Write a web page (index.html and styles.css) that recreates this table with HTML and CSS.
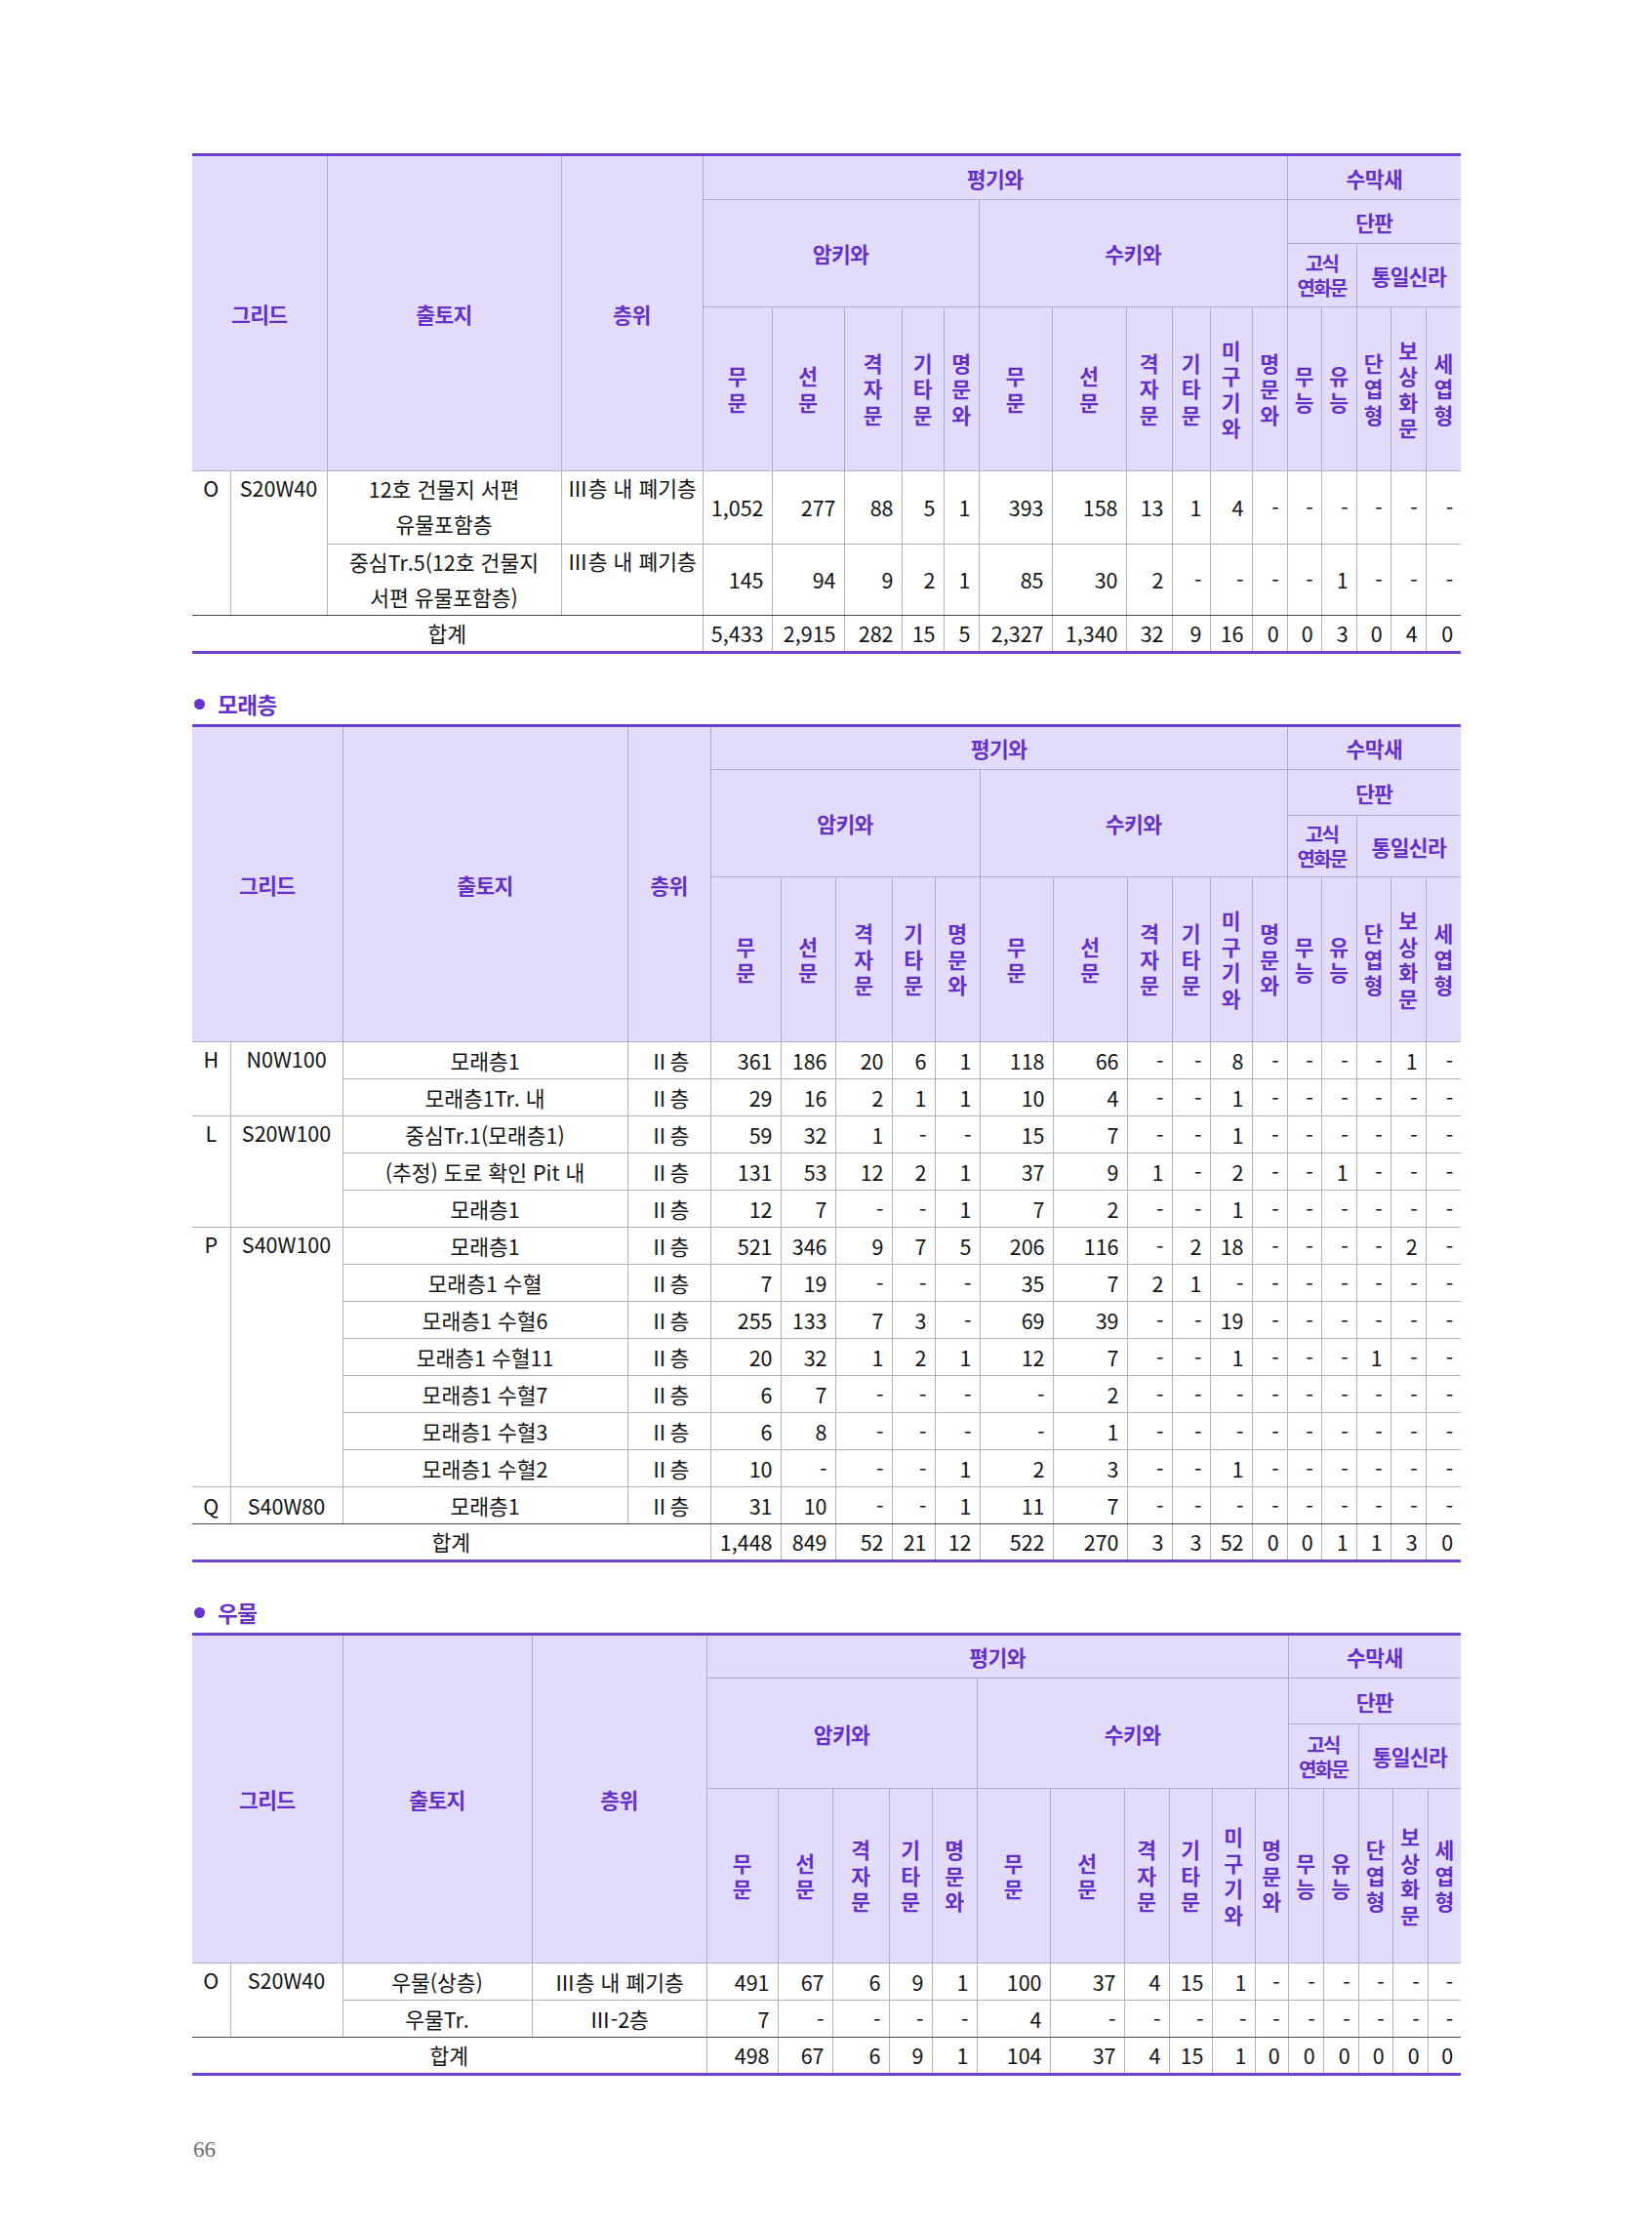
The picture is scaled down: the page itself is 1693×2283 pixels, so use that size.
FILE: index.html
```html
<!DOCTYPE html>
<html lang="ko">
<head>
<meta charset="utf-8">
<title>66</title>
<link rel="stylesheet" href="styles.css">
</head>
<body>
<div class="page">

<table class="tbl t1">
<colgroup>
<col class="w39"><col class="w99"><col class="w240"><col class="w145">
<col class="w71"><col class="w74"><col class="w59"><col class="w43"><col class="w36">
<col class="w75"><col class="w76"><col class="w47"><col class="w39"><col class="w43"><col class="w36">
<col class="w35"><col class="w36"><col class="w35"><col class="w36"><col class="w36">
</colgroup>
<thead>
<tr class="hr1">
<th colspan="2" rowspan="4">그리드</th>
<th rowspan="4">출토지</th>
<th rowspan="4">층위</th>
<th colspan="11">평기와</th>
<th colspan="5">수막새</th>
</tr>
<tr class="hr2">
<th colspan="5" rowspan="2">암키와</th>
<th colspan="6" rowspan="2">수키와</th>
<th colspan="5">단판</th>
</tr>
<tr class="hr3">
<th class="nar" colspan="2">고식<br>연화문</th>
<th colspan="3">통일신라</th>
</tr>
<tr class="hr4">
<th class="v">무<br>문</th><th class="v">선<br>문</th><th class="v">격<br>자<br>문</th><th class="v">기<br>타<br>문</th><th class="v">명<br>문<br>와</th>
<th class="v">무<br>문</th><th class="v">선<br>문</th><th class="v">격<br>자<br>문</th><th class="v">기<br>타<br>문</th><th class="v">미<br>구<br>기<br>와</th><th class="v">명<br>문<br>와</th>
<th class="v">무<br>능</th><th class="v">유<br>능</th><th class="v">단<br>엽<br>형</th><th class="v">보<br>상<br>화<br>문</th><th class="v">세<br>엽<br>형</th>
</tr>
</thead>
<tbody>
<tr class="ra">
<td class="c top end" rowspan="2">O</td>
<td class="c top end" rowspan="2">S20W40</td>
<td class="c top tall">12호 건물지 서편<br>유물포함층</td>
<td class="c top">Ⅲ층 내 폐기층</td>
<td>1,052</td><td>277</td><td>88</td><td>5</td><td>1</td>
<td>393</td><td>158</td><td>13</td><td>1</td><td>4</td><td>-</td>
<td>-</td><td>-</td><td>-</td><td>-</td><td>-</td>
</tr>
<tr class="rb end">
<td class="c top tall">중심Tr.5(12호 건물지<br>서편 유물포함층)</td>
<td class="c top">Ⅲ층 내 폐기층</td>
<td>145</td><td>94</td><td>9</td><td>2</td><td>1</td>
<td>85</td><td>30</td><td>2</td><td>-</td><td>-</td><td>-</td>
<td>-</td><td>1</td><td>-</td><td>-</td><td>-</td>
</tr>
<tr class="r total">
<td class="c" colspan="4">합계</td>
<td>5,433</td><td>2,915</td><td>282</td><td>15</td><td>5</td>
<td>2,327</td><td>1,340</td><td>32</td><td>9</td><td>16</td><td>0</td>
<td>0</td><td>3</td><td>0</td><td>4</td><td>0</td>
</tr>
</tbody>
</table>

<h2 class="sec">모래층</h2>

<table class="tbl t2">
<colgroup>
<col class="w39"><col class="w115"><col class="w292"><col class="w85">
<col class="w72"><col class="w56"><col class="w58"><col class="w44"><col class="w46">
<col class="w75"><col class="w76"><col class="w46"><col class="w39"><col class="w43"><col class="w36">
<col class="w35"><col class="w36"><col class="w35"><col class="w36"><col class="w36">
</colgroup>
<thead>
<tr class="hr1">
<th colspan="2" rowspan="4">그리드</th>
<th rowspan="4">출토지</th>
<th rowspan="4">층위</th>
<th colspan="11">평기와</th>
<th colspan="5">수막새</th>
</tr>
<tr class="hr2">
<th colspan="5" rowspan="2">암키와</th>
<th colspan="6" rowspan="2">수키와</th>
<th colspan="5">단판</th>
</tr>
<tr class="hr3">
<th class="nar" colspan="2">고식<br>연화문</th>
<th colspan="3">통일신라</th>
</tr>
<tr class="hr4">
<th class="v">무<br>문</th><th class="v">선<br>문</th><th class="v">격<br>자<br>문</th><th class="v">기<br>타<br>문</th><th class="v">명<br>문<br>와</th>
<th class="v">무<br>문</th><th class="v">선<br>문</th><th class="v">격<br>자<br>문</th><th class="v">기<br>타<br>문</th><th class="v">미<br>구<br>기<br>와</th><th class="v">명<br>문<br>와</th>
<th class="v">무<br>능</th><th class="v">유<br>능</th><th class="v">단<br>엽<br>형</th><th class="v">보<br>상<br>화<br>문</th><th class="v">세<br>엽<br>형</th>
</tr>
</thead>
<tbody>
<tr class="r">
<td class="c top" rowspan="2">H</td>
<td class="c top" rowspan="2">N0W100</td>
<td class="c">모래층1</td><td class="c">Ⅱ층</td>
<td>361</td><td>186</td><td>20</td><td>6</td><td>1</td>
<td>118</td><td>66</td><td>-</td><td>-</td><td>8</td><td>-</td>
<td>-</td><td>-</td><td>-</td><td>1</td><td>-</td>
</tr>
<tr class="r">
<td class="c">모래층1Tr. 내</td><td class="c">Ⅱ층</td>
<td>29</td><td>16</td><td>2</td><td>1</td><td>1</td>
<td>10</td><td>4</td><td>-</td><td>-</td><td>1</td><td>-</td>
<td>-</td><td>-</td><td>-</td><td>-</td><td>-</td>
</tr>
<tr class="r">
<td class="c top" rowspan="3">L</td>
<td class="c top" rowspan="3">S20W100</td>
<td class="c">중심Tr.1(모래층1)</td><td class="c">Ⅱ층</td>
<td>59</td><td>32</td><td>1</td><td>-</td><td>-</td>
<td>15</td><td>7</td><td>-</td><td>-</td><td>1</td><td>-</td>
<td>-</td><td>-</td><td>-</td><td>-</td><td>-</td>
</tr>
<tr class="r">
<td class="c">(추정) 도로 확인 Pit 내</td><td class="c">Ⅱ층</td>
<td>131</td><td>53</td><td>12</td><td>2</td><td>1</td>
<td>37</td><td>9</td><td>1</td><td>-</td><td>2</td><td>-</td>
<td>-</td><td>1</td><td>-</td><td>-</td><td>-</td>
</tr>
<tr class="r">
<td class="c">모래층1</td><td class="c">Ⅱ층</td>
<td>12</td><td>7</td><td>-</td><td>-</td><td>1</td>
<td>7</td><td>2</td><td>-</td><td>-</td><td>1</td><td>-</td>
<td>-</td><td>-</td><td>-</td><td>-</td><td>-</td>
</tr>
<tr class="r">
<td class="c top" rowspan="7">P</td>
<td class="c top" rowspan="7">S40W100</td>
<td class="c">모래층1</td><td class="c">Ⅱ층</td>
<td>521</td><td>346</td><td>9</td><td>7</td><td>5</td>
<td>206</td><td>116</td><td>-</td><td>2</td><td>18</td><td>-</td>
<td>-</td><td>-</td><td>-</td><td>2</td><td>-</td>
</tr>
<tr class="r">
<td class="c">모래층1 수혈</td><td class="c">Ⅱ층</td>
<td>7</td><td>19</td><td>-</td><td>-</td><td>-</td>
<td>35</td><td>7</td><td>2</td><td>1</td><td>-</td><td>-</td>
<td>-</td><td>-</td><td>-</td><td>-</td><td>-</td>
</tr>
<tr class="r">
<td class="c">모래층1 수혈6</td><td class="c">Ⅱ층</td>
<td>255</td><td>133</td><td>7</td><td>3</td><td>-</td>
<td>69</td><td>39</td><td>-</td><td>-</td><td>19</td><td>-</td>
<td>-</td><td>-</td><td>-</td><td>-</td><td>-</td>
</tr>
<tr class="r">
<td class="c">모래층1 수혈11</td><td class="c">Ⅱ층</td>
<td>20</td><td>32</td><td>1</td><td>2</td><td>1</td>
<td>12</td><td>7</td><td>-</td><td>-</td><td>1</td><td>-</td>
<td>-</td><td>-</td><td>1</td><td>-</td><td>-</td>
</tr>
<tr class="r">
<td class="c">모래층1 수혈7</td><td class="c">Ⅱ층</td>
<td>6</td><td>7</td><td>-</td><td>-</td><td>-</td>
<td>-</td><td>2</td><td>-</td><td>-</td><td>-</td><td>-</td>
<td>-</td><td>-</td><td>-</td><td>-</td><td>-</td>
</tr>
<tr class="r">
<td class="c">모래층1 수혈3</td><td class="c">Ⅱ층</td>
<td>6</td><td>8</td><td>-</td><td>-</td><td>-</td>
<td>-</td><td>1</td><td>-</td><td>-</td><td>-</td><td>-</td>
<td>-</td><td>-</td><td>-</td><td>-</td><td>-</td>
</tr>
<tr class="r">
<td class="c">모래층1 수혈2</td><td class="c">Ⅱ층</td>
<td>10</td><td>-</td><td>-</td><td>-</td><td>1</td>
<td>2</td><td>3</td><td>-</td><td>-</td><td>1</td><td>-</td>
<td>-</td><td>-</td><td>-</td><td>-</td><td>-</td>
</tr>
<tr class="r end">
<td class="c">Q</td>
<td class="c">S40W80</td>
<td class="c">모래층1</td><td class="c">Ⅱ층</td>
<td>31</td><td>10</td><td>-</td><td>-</td><td>1</td>
<td>11</td><td>7</td><td>-</td><td>-</td><td>-</td><td>-</td>
<td>-</td><td>-</td><td>-</td><td>-</td><td>-</td>
</tr>
<tr class="r total">
<td class="c" colspan="4">합계</td>
<td>1,448</td><td>849</td><td>52</td><td>21</td><td>12</td>
<td>522</td><td>270</td><td>3</td><td>3</td><td>52</td><td>0</td>
<td>0</td><td>1</td><td>1</td><td>3</td><td>0</td>
</tr>
</tbody>
</table>

<h2 class="sec">우물</h2>

<table class="tbl t3">
<colgroup>
<col class="w39"><col class="w115"><col class="w194"><col class="w179">
<col class="w73"><col class="w56"><col class="w58"><col class="w44"><col class="w46">
<col class="w75"><col class="w76"><col class="w46"><col class="w44"><col class="w44"><col class="w34">
<col class="w36"><col class="w36"><col class="w35"><col class="w36"><col class="w34">
</colgroup>
<thead>
<tr class="hr1">
<th colspan="2" rowspan="4">그리드</th>
<th rowspan="4">출토지</th>
<th rowspan="4">층위</th>
<th colspan="11">평기와</th>
<th colspan="5">수막새</th>
</tr>
<tr class="hr2">
<th colspan="5" rowspan="2">암키와</th>
<th colspan="6" rowspan="2">수키와</th>
<th colspan="5">단판</th>
</tr>
<tr class="hr3">
<th class="nar" colspan="2">고식<br>연화문</th>
<th colspan="3">통일신라</th>
</tr>
<tr class="hr4">
<th class="v">무<br>문</th><th class="v">선<br>문</th><th class="v">격<br>자<br>문</th><th class="v">기<br>타<br>문</th><th class="v">명<br>문<br>와</th>
<th class="v">무<br>문</th><th class="v">선<br>문</th><th class="v">격<br>자<br>문</th><th class="v">기<br>타<br>문</th><th class="v">미<br>구<br>기<br>와</th><th class="v">명<br>문<br>와</th>
<th class="v">무<br>능</th><th class="v">유<br>능</th><th class="v">단<br>엽<br>형</th><th class="v">보<br>상<br>화<br>문</th><th class="v">세<br>엽<br>형</th>
</tr>
</thead>
<tbody>
<tr class="r">
<td class="c top end" rowspan="2">O</td>
<td class="c top end" rowspan="2">S20W40</td>
<td class="c">우물(상층)</td><td class="c">Ⅲ층 내 폐기층</td>
<td>491</td><td>67</td><td>6</td><td>9</td><td>1</td>
<td>100</td><td>37</td><td>4</td><td>15</td><td>1</td><td>-</td>
<td>-</td><td>-</td><td>-</td><td>-</td><td>-</td>
</tr>
<tr class="r end">
<td class="c">우물Tr.</td><td class="c">Ⅲ-2층</td>
<td>7</td><td>-</td><td>-</td><td>-</td><td>-</td>
<td>4</td><td>-</td><td>-</td><td>-</td><td>-</td><td>-</td>
<td>-</td><td>-</td><td>-</td><td>-</td><td>-</td>
</tr>
<tr class="r total">
<td class="c" colspan="4">합계</td>
<td>498</td><td>67</td><td>6</td><td>9</td><td>1</td>
<td>104</td><td>37</td><td>4</td><td>15</td><td>1</td><td>0</td>
<td>0</td><td>0</td><td>0</td><td>0</td><td>0</td>
</tr>
</tbody>
</table>

<p class="pnum">66</p>

</div>
</body>
</html>
```

FILE: styles.css
```css
* { box-sizing: border-box; }

html, body {
  margin: 0;
  padding: 0;
  background: #ffffff;
}

body {
  font-family: "Noto Sans CJK KR", "Noto Sans", sans-serif;
  color: #141414;
}

.page {
  width: 1693px;
  padding: 157px 193px 60px 197px;
}

/* ---------- tables ---------- */
.tbl {
  width: 1300px;
  border-collapse: collapse;
  table-layout: fixed;
  border-top: 3px solid #6b3fd0;
  border-bottom: 3px solid #6b3fd0;
}

.tbl th {
  background: #e2dcfa;
  color: #6430c8;
  font-weight: 700;
  font-size: 21.5px;
  line-height: 25px;
  letter-spacing: -0.6px;
  border: 1px solid #b2acc6;
  padding: 0;
  text-align: center;
  vertical-align: middle;
}

.tbl th.nar {
  font-size: 20px;
  letter-spacing: -1.6px;
}

.tbl th.v {
  line-height: 26.5px;
  letter-spacing: 0;
}

.tbl td {
  font-size: 21.5px;
  line-height: 34px;
  border: 1px solid #b4b4b4;
  padding: 0 8px 0 1px;
  text-align: right;
  vertical-align: middle;
  white-space: nowrap;
}

.tbl td.c {
  text-align: center;
  padding: 0 1px;
}

.tbl td.top {
  vertical-align: top;
}

.tbl td.tall {
  line-height: 36px;
}

.tbl tr > :first-child { border-left: none; }
.tbl tr > :last-child { border-right: none; }

.tbl tr.end td,
.tbl td.end {
  border-bottom-color: #454545;
}

.tbl tr.total td {
  border-top-color: #454545;
  border-bottom: none;
}

/* row heights */
.t1 .hr1 { height: 46px; }
.t1 .hr2 { height: 45px; }
.t1 .hr3 { height: 65px; }
.t1 .hr4 { height: 168px; }

.t2 .hr1 { height: 45px; }
.t2 .hr2 { height: 47px; }
.t2 .hr3 { height: 63px; }
.t2 .hr4 { height: 169px; }

.t3 .hr1 { height: 45px; }
.t3 .hr2 { height: 47px; }
.t3 .hr3 { height: 66px; }
.t3 .hr4 { height: 179px; }

.tbl tr.r { height: 38px; }
.tbl tr.ra { height: 75px; }
.tbl tr.rb { height: 73px; }

/* column widths */
.w34 { width: 34px; }
.w35 { width: 35px; }
.w36 { width: 36px; }
.w39 { width: 39px; }
.w43 { width: 43px; }
.w44 { width: 44px; }
.w46 { width: 46px; }
.w47 { width: 47px; }
.w56 { width: 56px; }
.w58 { width: 58px; }
.w59 { width: 59px; }
.w71 { width: 71px; }
.w72 { width: 72px; }
.w73 { width: 73px; }
.w74 { width: 74px; }
.w75 { width: 75px; }
.w76 { width: 76px; }
.w85 { width: 85px; }
.w99 { width: 99px; }
.w115 { width: 115px; }
.w145 { width: 145px; }
.w179 { width: 179px; }
.w194 { width: 194px; }
.w240 { width: 240px; }
.w292 { width: 292px; }

/* ---------- section titles ---------- */
.sec {
  display: flex;
  align-items: center;
  gap: 13px;
  height: 30px;
  margin: 36px 0 6px;
  padding-left: 2px;
  font-size: 22.5px;
  font-weight: 700;
  line-height: 30px;
  letter-spacing: -0.5px;
  color: #6430c8;
}

.sec::before {
  content: "";
  width: 11px;
  height: 11px;
  border-radius: 50%;
  background: #6833d0;
  flex: none;
}

/* ---------- page number ---------- */
.pnum {
  margin: 61px 0 0;
  padding-left: 1px;
  font-family: "Liberation Serif", serif;
  font-size: 23px;
  line-height: 30px;
  color: #707070;
}
```
